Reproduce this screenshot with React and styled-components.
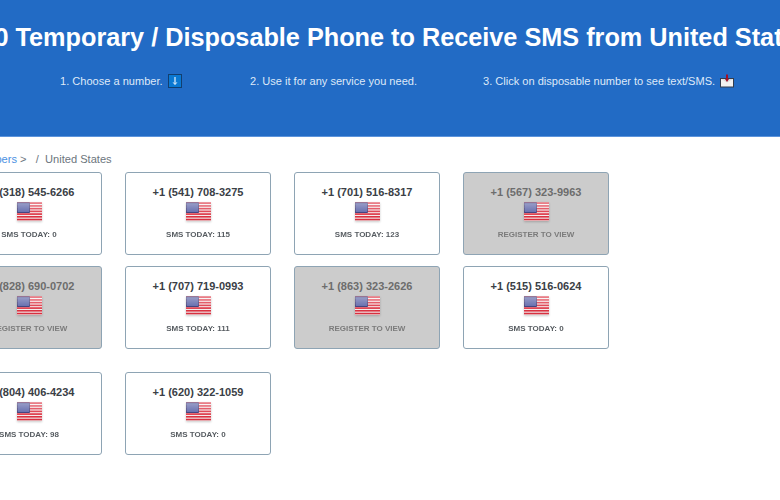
import React from "react";
import styled, { createGlobalStyle } from "styled-components";

const GlobalStyle = createGlobalStyle`
  html, body {
    margin: 0;
    padding: 0;
    overflow: hidden;
    background: #fff;
    font-family: "Liberation Sans", Arial, sans-serif;
  }
`;

const numbers = [
  [
    { phone: "+1 (318) 545-6266", sms: 0 },
    { phone: "+1 (541) 708-3275", sms: 115 },
    { phone: "+1 (701) 516-8317", sms: 123 },
    { phone: "+1 (567) 323-9963", locked: true },
  ],
  [
    { phone: "+1 (828) 690-0702", locked: true },
    { phone: "+1 (707) 719-0993", sms: 111 },
    { phone: "+1 (863) 323-2626", locked: true },
    { phone: "+1 (515) 516-0624", sms: 0 },
  ],
  [
    { phone: "+1 (804) 406-4234", sms: 98 },
    { phone: "+1 (620) 322-1059", sms: 0 },
  ],
];

function Flag() {
  const stripes = [0, 1, 2, 3, 4, 5, 6];
  return (
    <FlagSvg viewBox="0 0 25 20" width="25" height="20">
      <defs>
        <linearGradient id="gloss" x1="0" y1="0" x2="0" y2="1">
          <stop offset="0" stopColor="#fff" stopOpacity="0.4" />
          <stop offset="0.5" stopColor="#fff" stopOpacity="0.12" />
          <stop offset="0.55" stopColor="#fff" stopOpacity="0" />
          <stop offset="1" stopColor="#000" stopOpacity="0.04" />
        </linearGradient>
      </defs>
      <rect x="0" y="0.5" width="25" height="18.5" fill="#f6eeee" />
      {stripes.map((i) => (
        <rect key={i} x="0" y={0.4 + i * 2.72} width="25" height="1.6" fill="#dc3040" />
      ))}
      <rect x="0.4" y="0.9" width="12" height="9.7" fill="#5860a6" stroke="#2b3070" strokeWidth="0.8" />
      <rect x="0" y="0.5" width="25" height="18.5" fill="url(#gloss)" />
    </FlagSvg>
  );
}

function DownIcon() {
  return (
    <InlineIcon viewBox="0 0 14 14" width="14" height="14">
      <rect x="0.5" y="0.5" width="13" height="13" fill="#0a78d2" stroke="#123f70" />
      <path d="M7 3v7" stroke="#e8f4ff" strokeWidth="1.2" />
      <path d="M5.2 8.4 7 10.6l1.8-2.2" fill="none" stroke="#e8f4ff" strokeWidth="1" />
    </InlineIcon>
  );
}

function InboxIcon() {
  return (
    <InlineIcon viewBox="0 0 14 14" width="14" height="14">
      <rect x="0.5" y="4.5" width="13" height="8.5" fill="#f2f2f2" stroke="#333c4c" />
      <path d="M1 5 7 8.5 13 5" fill="#dcdcdc" />
      <path d="M6 0.5h2V5h1L7 8 5 5h1z" fill="#a0102a" />
    </InlineIcon>
  );
}

export default function App() {
  return (
    <>
      <GlobalStyle />
      <Header>
        <Title>100 Temporary / Disposable Phone to Receive SMS from United States</Title>
        <Steps>
          <Step>
            1. Choose a number. <DownIcon />
          </Step>
          <Step>2. Use it for any service you need.</Step>
          <Step>
            3. Click on disposable number to see text/SMS. <InboxIcon />
          </Step>
        </Steps>
      </Header>
      <Breadcrumb>
        <CrumbLink>Numbers</CrumbLink> &gt; &nbsp; / &nbsp;United States
      </Breadcrumb>
      <Rows>
        {numbers.map((row, i) => (
          <Row key={i}>
            {row.map((item) => (
              <Card key={item.phone} $locked={item.locked}>
                <Phone>{item.phone}</Phone>
                <Flag />
                <Caption>
                  {item.locked ? "REGISTER TO VIEW" : `SMS TODAY: ${item.sms}`}
                </Caption>
              </Card>
            ))}
          </Row>
        ))}
      </Rows>
    </>
  );
}

const Header = styled.header`
  box-sizing: border-box;
  height: 137px;
  padding-top: 20px;
  background: #226bc5;
  border-bottom: 1px solid #5c94dc;
  overflow: hidden;
`;

const Title = styled.h1`
  display: flex;
  justify-content: center;
  margin: 0;
  padding-right: 3px;
  color: #fff;
  font-size: 25.25px;
  line-height: 34px;
  font-weight: 700;
  white-space: nowrap;
`;

const Steps = styled.div`
  display: grid;
  grid-template-columns: 190px 233px 1fr;
  margin-top: 19px;
  padding-left: 60px;
`;

const Step = styled.div`
  color: #dfe9f8;
  font-size: 11.05px;
  line-height: 16px;
  white-space: nowrap;
`;

const InlineIcon = styled.svg`
  margin-left: 2px;
  vertical-align: -3px;
`;

const Breadcrumb = styled.div`
  margin: 14px 0 0 -28px;
  color: #6c757d;
  font-size: 11.1px;
  line-height: 16px;
  white-space: nowrap;
`;

const CrumbLink = styled.span`
  color: #4a90e2;
`;

const Rows = styled.div`
  display: flex;
  flex-direction: column;
  gap: 11px;
  margin: 5px 0 0 -44px;

  & > :last-child {
    margin-top: 12px;
  }
`;

const Row = styled.div`
  display: flex;
  gap: 23px;
`;

const Card = styled.div`
  box-sizing: border-box;
  width: 146px;
  height: 83px;
  display: flex;
  flex-direction: column;
  align-items: center;
  padding-top: 12px;
  border: 1px solid #8ea4b4;
  border-radius: 3px;
  background: ${(p) => (p.$locked ? "#cccccc" : "#fff")};
  color: ${(p) => (p.$locked ? "#6d6d6d" : "#3a4046")};
`;

const Phone = styled.div`
  font-size: 11px;
  line-height: 15px;
  font-weight: 700;
  white-space: nowrap;
`;

const FlagSvg = styled.svg`
  display: block;
  margin-top: 2px;
  filter: drop-shadow(0 1px 1px rgba(0, 0, 0, 0.2));
`;

const Caption = styled.div`
  margin-top: 8px;
  font-size: 8px;
  line-height: 10px;
  font-weight: 700;
  white-space: nowrap;
  opacity: 0.85;
`;
